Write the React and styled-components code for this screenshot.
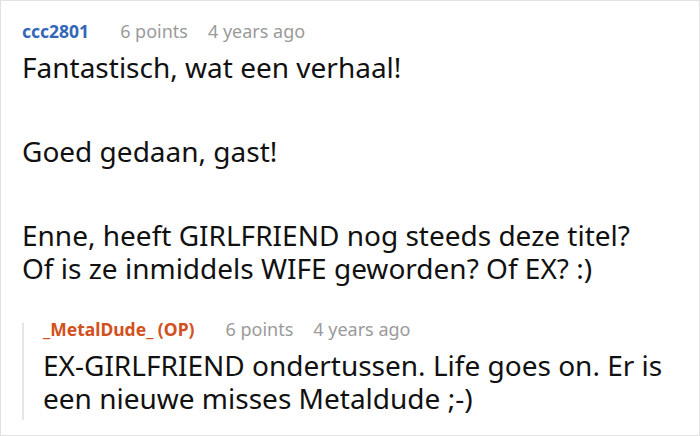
import React from "react";
import styled, { createGlobalStyle } from "styled-components";

const Global = createGlobalStyle`
  html, body { margin: 0; padding: 0; background: #fff; }
  body { font-family: "Noto Sans", "Open Sans", sans-serif; }
  * { box-sizing: border-box; }
`;

const Frame = styled.div`
  width: 700px;
  height: 436px;
  border: 1px solid #e2e2e2;
  padding: 24px 20px 0 21px;
  overflow: hidden;
  background: #fff;
`;

const Comment = styled.div`
  display: flex;
  flex-direction: column;
`;

const Reply = styled.div`
  display: flex;
  flex-direction: column;
  margin-top: 38px;
  border-left: 2px solid #e6e6e6;
  padding: 0 0 5px 19px;
`;

const Header = styled.div`
  display: flex;
  align-items: baseline;
  line-height: 12px;
  height: 12px;
  white-space: nowrap;
`;

const Author = styled.span`
  font-size: 17.5px;
  font-weight: 700;
  color: ${(p) => (p.$op ? "#d2501c" : "#3366b8")};
  margin-right: 31px;
`;

const Meta = styled.span`
  font-size: 18px;
  color: #9a9a9a;
  margin-right: 20px;
`;

const Body = styled.div`
  margin-top: 14px;
  font-size: 28px;
  line-height: 33px;
  color: #111;
`;

const Para = styled.p`
  margin: 0 0 51px 0;
  white-space: nowrap;
  &:last-child { margin-bottom: 0; }
`;

export default function App() {
  return (
    <>
      <Global />
      <Frame>
        <Comment>
          <Header>
            <Author>ccc2801</Author>
            <Meta>6 points</Meta>
            <Meta>4 years ago</Meta>
          </Header>
          <Body>
            <Para>Fantastisch, wat een verhaal!</Para>
            <Para>Goed gedaan, gast!</Para>
            <Para>
              Enne, heeft GIRLFRIEND nog steeds deze titel?
              <br />
              Of is ze inmiddels WIFE geworden? Of EX? :)
            </Para>
          </Body>
          <Reply>
            <Header>
              <Author $op>_MetalDude_ (OP)</Author>
              <Meta>6 points</Meta>
              <Meta>4 years ago</Meta>
            </Header>
            <Body>
              <Para>
                EX-GIRLFRIEND ondertussen. Life goes on. Er is
                <br />
                een nieuwe misses Metaldude ;-)
              </Para>
            </Body>
          </Reply>
        </Comment>
      </Frame>
    </>
  );
}
